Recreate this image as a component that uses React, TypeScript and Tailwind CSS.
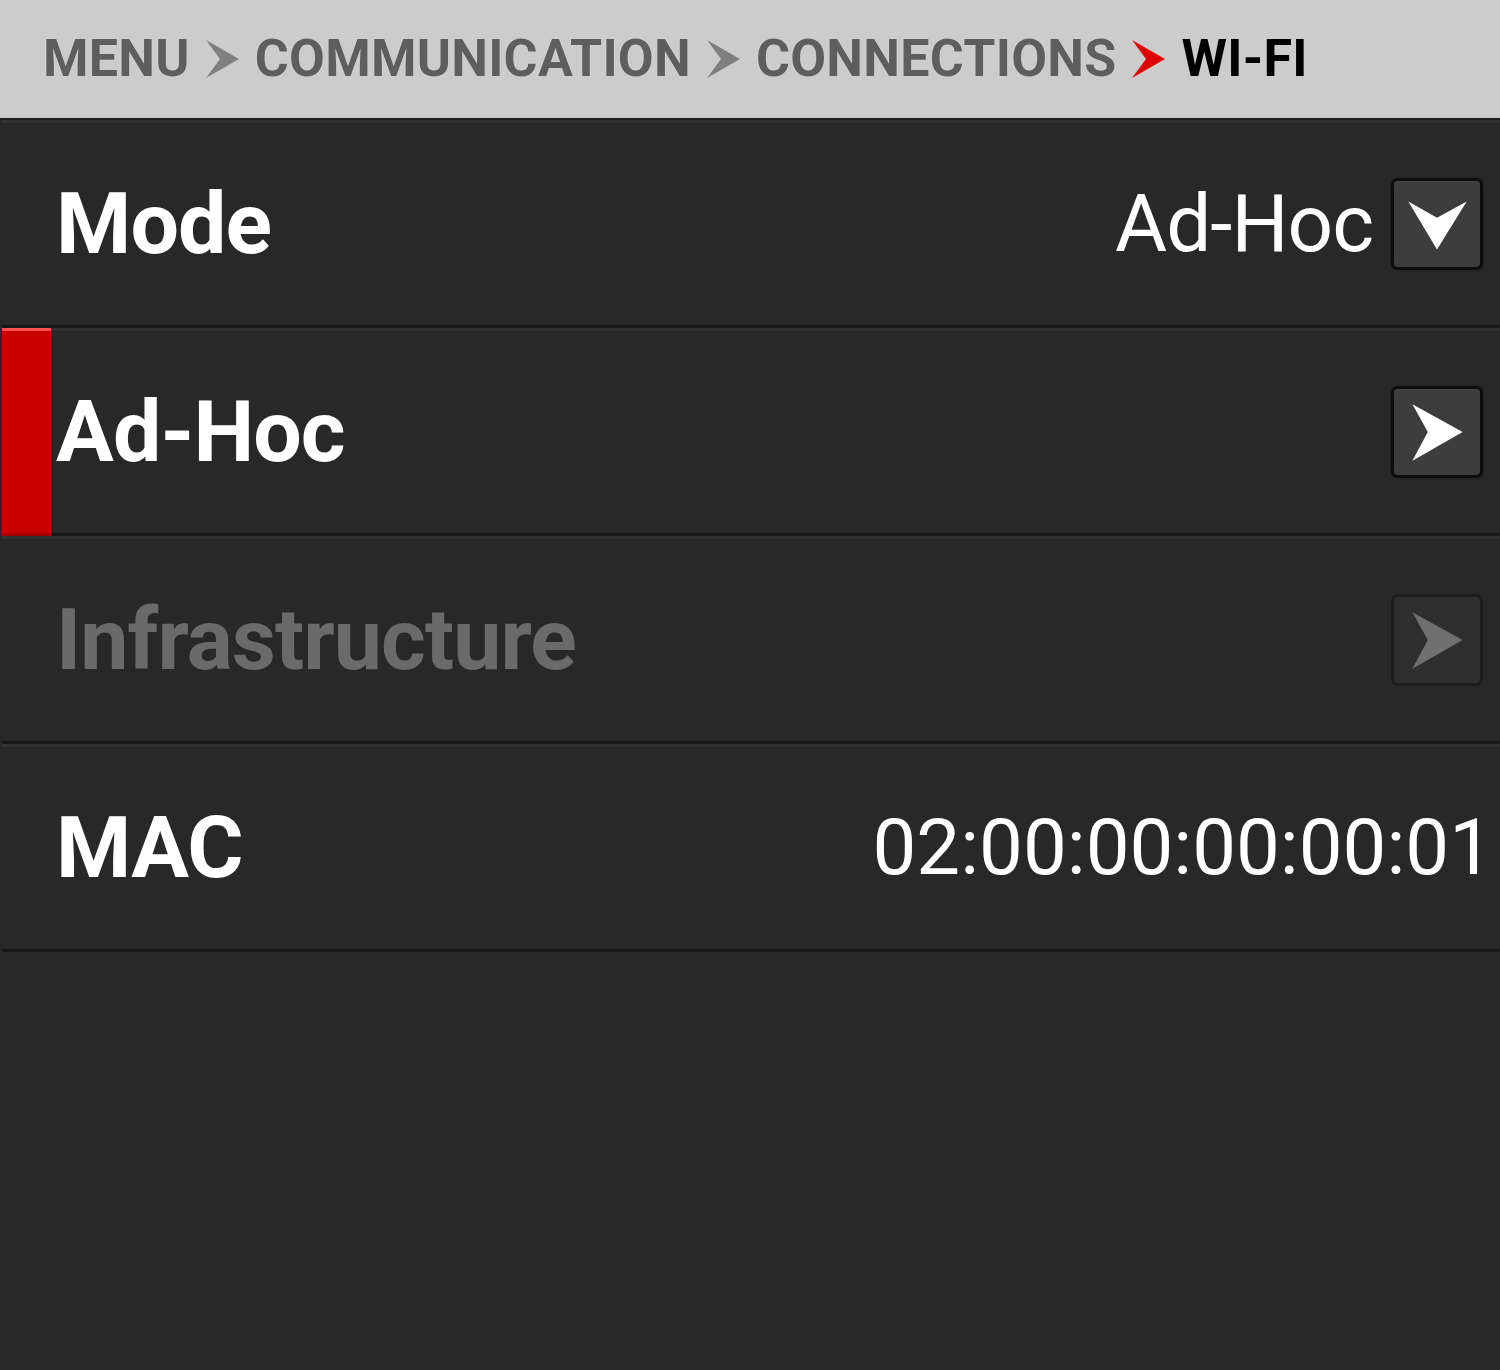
import type { ReactNode } from "react";

function Chevron({ color }: { color: string }) {
  return (
    <svg width="33" height="38" viewBox="0 0 33 38" className="shrink-0">
      <path d="M0 0 L33 19 L0 38 L14 19 Z" fill={color} />
    </svg>
  );
}

function Breadcrumb({ items }: { items: string[] }) {
  return (
    <header className="h-[120px] bg-[#cccccc] border-b-2 border-[#1e1e1e] flex items-center pl-[43px] gap-[16px]">
      {items.map((item, i) => {
        const last = i === items.length - 1;
        return (
          <div key={item} className="flex items-center gap-[16px]">
            {i > 0 && <Chevron color={last ? "#e00000" : "#7f7f7f"} />}
            <span
              className={`text-[52px] font-bold leading-none tracking-[0.25px] ${
                last ? "text-black" : "text-[#5e5e5e] [text-shadow:0_0_1px_#e6e6e6]"
              }`}
            >
              {item}
            </span>
          </div>
        );
      })}
    </header>
  );
}

function IconButton({
  dir,
  disabled,
}: {
  dir: "down" | "right";
  disabled?: boolean;
}) {
  return (
    <div
      className={`w-[92px] h-[92px] rounded-[7px] border-[3px] flex items-center justify-center shrink-0 ${
        disabled
          ? "bg-[#2e2e2e] border-[#1d1d1d]"
          : "bg-[#3d3d3d] border-[#0c0c0c] shadow-[inset_0_1px_0_#4a4a4a,0_0_2px_#1a1a1a]"
      }`}
    >
      <svg width="86" height="86" viewBox="0 0 84 84">
        {dir === "down" ? (
          <path d="M14 20 L42 36 L71 20 L42 67 Z" fill="#ffffff" />
        ) : (
          <path
            d="M18 15 L67 42 L18 70 L33 42 Z"
            fill={disabled ? "#707070" : "#ffffff"}
          />
        )}
      </svg>
    </div>
  );
}

function Row({
  label,
  selected,
  dim,
  children,
}: {
  label: string;
  selected?: boolean;
  dim?: boolean;
  children?: ReactNode;
}) {
  return (
    <div className="flex h-[208px]">
      <div
        className={`w-[49px] shrink-0 border-t-[3px] border-b-[3px] ${
          selected
            ? "bg-[#c80000] border-t-[#ff5050] border-b-[#a00000]"
            : "border-t-[#323232] border-b-[#181818]"
        }`}
      />
      <div className="flex-1 flex items-center border-t-[3px] border-t-[#323232] border-b-[3px] border-b-[#181818] pl-[5px] pr-[17px]">
        <span
          className={`text-[86px] font-bold leading-none tracking-[-0.9px] ${
            dim ? "text-[#6a6a6a]" : "text-white"
          }`}
        >
          {label}
        </span>
        <div className="ml-auto flex items-center gap-[18px]">{children}</div>
      </div>
    </div>
  );
}

export default function App() {
  return (
    <div className="w-[1500px] h-[1370px] bg-[#282828] font-['Roboto',sans-serif] overflow-hidden">
      <Breadcrumb items={["MENU", "COMMUNICATION", "CONNECTIONS", "WI-FI"]} />
      <div className="pl-[2px]">
        <Row label="Mode">
          <span className="text-[80px] text-white leading-none tracking-[-1px]">Ad-Hoc</span>
          <IconButton dir="down" />
        </Row>
        <Row label="Ad-Hoc" selected>
          <IconButton dir="right" />
        </Row>
        <Row label="Infrastructure" dim>
          <IconButton dir="right" disabled />
        </Row>
        <Row label="MAC">
          <span className="text-[78px] text-white leading-none -mr-[10px]">
            02:00:00:00:00:01
          </span>
        </Row>
      </div>
    </div>
  );
}
